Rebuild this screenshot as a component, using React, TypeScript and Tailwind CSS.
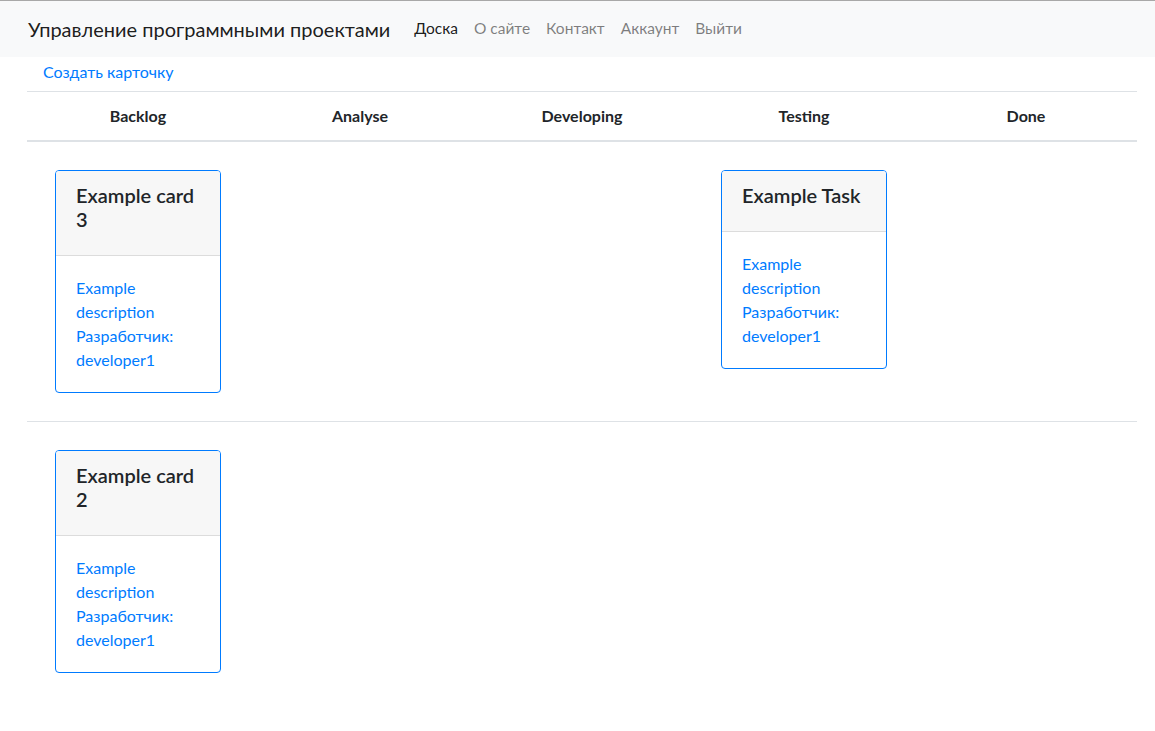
import React from 'react';

const columns = ['Backlog', 'Analyse', 'Developing', 'Testing', 'Done'];

type Card = { title: string; description: string; developer: string };

const rows: (Card | null)[][] = [
  [
    { title: 'Example card 3', description: 'Example description', developer: 'developer1' },
    null,
    null,
    { title: 'Example Task', description: 'Example description', developer: 'developer1' },
    null,
  ],
  [{ title: 'Example card 2', description: 'Example description', developer: 'developer1' }, null, null, null, null],
];

const TaskCard = ({ card }: { card: Card }) => (
  <div className="mx-auto my-4 w-[166px] rounded border border-[#007bff] bg-white text-left">
    <div className="rounded-t-[3px] border-b border-[#dcdcdc] bg-[#f7f7f7] px-5 pt-3 pb-3">
      <h5 className="mb-3 text-[20px] leading-6 font-semibold text-[#212529]">{card.title}</h5>
    </div>
    <div className="p-5 text-[16px] leading-6 text-[#007bff]">
      <div>{card.description}</div>
      <div>Разработчик: {card.developer}</div>
    </div>
  </div>
);

export default function App() {
  const nav = ['О сайте', 'Контакт', 'Аккаунт', 'Выйти'];
  return (
    <div className="min-h-[731px] bg-white font-['Lato',sans-serif] text-[#212529]">
      {/* Navbar */}
      <nav className="flex h-[57px] items-center border-t border-[#a8a8a8] bg-[#f8f9fa] px-[28px]">
        <span className="mr-[24px] text-[20px] leading-[30px] text-black/90">Управление программными проектами</span>
        <a className="pr-2 text-[15.5px] text-black/90">Доска</a>
        {nav.map((n) => (
          <a key={n} className="px-2 text-[15.5px] text-black/50">
            {n}
          </a>
        ))}
      </nav>

      <div className="ml-[27px] w-[1110px]">
        <a className="block px-4 pt-[3px] pb-[7px] text-[16px] leading-6 text-[#007bff]">Создать карточку</a>

        <table className="w-full table-fixed border-collapse">
          <thead>
            <tr>
              {columns.map((c) => (
                <th key={c} className="border-t border-b-2 border-[#dee2e6] p-3 text-center text-[16px] leading-6 font-bold">
                  {c}
                </th>
              ))}
            </tr>
          </thead>
          <tbody>
            {rows.map((row, i) => (
              <tr key={i}>
                {row.map((card, j) => (
                  <td key={j} className={`p-3 align-top ${i > 0 ? 'border-t border-[#dee2e6]' : ''}`}>
                    {card && <TaskCard card={card} />}
                  </td>
                ))}
              </tr>
            ))}
          </tbody>
        </table>
      </div>
    </div>
  );
}
